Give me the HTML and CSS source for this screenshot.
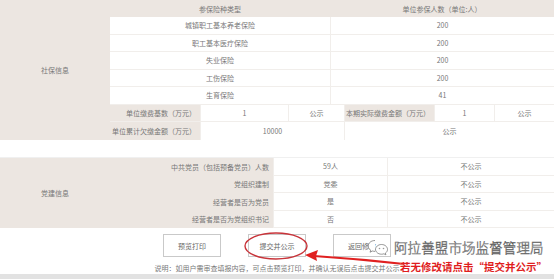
FILE: index.html
```html
<!DOCTYPE html>
<html lang="zh">
<head>
<meta charset="utf-8">
<title>信息公示</title>
<link rel="stylesheet" href="styles.css">
</head>
<body>
<div class="page">
  <section class="sb">
    <div class="side">社保信息</div>
    <div class="row two head"><div class="c">参保险种类型</div><div class="c">单位参保人数（单位:人）</div></div>
    <div class="row two"><div class="c">城镇职工基本养老保险</div><div class="c">200</div></div>
    <div class="row two"><div class="c">职工基本医疗保险</div><div class="c">200</div></div>
    <div class="row two"><div class="c">失业保险</div><div class="c">200</div></div>
    <div class="row two"><div class="c">工伤保险</div><div class="c">200</div></div>
    <div class="row two"><div class="c">生育保险</div><div class="c">41</div></div>
    <div class="row six">
      <div class="c lab">单位缴费基数（万元）</div><div class="c">1</div><div class="c">公示</div>
      <div class="c lab">本期实际缴费金额（万元）</div><div class="c">1</div><div class="c">公示</div>
    </div>
    <div class="row three">
      <div class="c lab">单位累计欠缴金额（万元）</div><div class="c">10000</div><div class="c">公示</div>
    </div>
  </section>

  <section class="dj">
    <div class="side">党建信息</div>
    <div class="c lab">中共党员（包括预备党员）人数</div><div class="c v">59人</div><div class="c v">不公示</div>
    <div class="c lab">党组织建制</div><div class="c v">党委</div><div class="c v">不公示</div>
    <div class="c lab">经营者是否为党员</div><div class="c v">是</div><div class="c v">不公示</div>
    <div class="c lab">经营者是否为党组织书记</div><div class="c v">否</div><div class="c v">不公示</div>
  </section>

  <div class="actions">
    <div class="btns">
      <button class="btn">预览打印</button>
      <button class="btn">提交并公示</button>
      <button class="btn">返回修改</button>
    </div>
    <p class="note">说明：如用户需审查填报内容，可点击预览打印，并确认无误后点击提交并公示</p>
  </div>
  <div class="band"></div>

  <svg class="marks" width="554" height="279" viewBox="0 0 554 279">
    <ellipse cx="276" cy="246" rx="31" ry="13" fill="none" stroke="#c8343a" stroke-width="1.4"/>
    <path d="M404 264 Q360 259 314 256" fill="none" stroke="#e02020" stroke-width="2"/>
    <path d="M305 255 L318 250 L316 256 L317 261 Z" fill="#e02020"/>
  </svg>

  <div class="wm">
    <svg class="wx" width="22" height="17" viewBox="0 0 22 17">
      <path d="M8 1.5C4.2 1.5 1.2 4 1.2 7c0 1.7 1 3.2 2.5 4.2l-.6 2 2.3-1.2c.8.2 1.7.4 2.6.4" fill="#fff" stroke="#777" stroke-width="0.8"/>
      <path d="M14.5 5.5c3.3 0 6 2.2 6 4.9 0 1.5-.8 2.8-2.1 3.7l.5 1.7-2-1c-.8.3-1.6.4-2.4.4-3.3 0-6-2.2-6-4.8s2.7-4.9 6-4.9z" fill="#fff" stroke="#777" stroke-width="0.8"/>
      <circle cx="12.5" cy="9.5" r="0.8" fill="#999"/>
      <circle cx="16.5" cy="9.5" r="0.8" fill="#999"/>
    </svg>
    <span class="wm-text">阿拉善盟市场监督管理局</span>
  </div>
  <div class="tip">若无修改请点击“提交并公示”</div>
</div>
</body>
</html>
```

FILE: styles.css
```css
* { box-sizing: border-box; }
html, body { margin: 0; padding: 0; background: #fff; }
body {
  width: 554px;
  height: 279px;
  overflow: hidden;
  font-family: "Noto Sans CJK SC", "Noto Sans", sans-serif;
  font-size: 7px;
  color: #777;
}
.page {
  position: relative;
  width: 554px;
  height: 279px;
}
.c {
  display: flex;
  align-items: center;
  justify-content: center;
  white-space: nowrap;
  overflow: hidden;
}
.lab {
  justify-content: flex-end;
  padding-right: 4px;
  background: #ece6e1;
}

/* 社保信息 */
.sb {
  display: grid;
  grid-template-columns: 110px 444px;
  grid-template-rows: 17px repeat(7, 17.5px);
}
.side {
  grid-column: 1;
  grid-row: 1 / -1;
  background: #ece6e1;
  display: flex;
  align-items: center;
  justify-content: center;
}
.row {
  grid-column: 2;
  display: grid;
  border-bottom: 1px solid #f1eeeb;
}
.row > .c + .c { border-left: 1px solid #f1eeeb; }
.two { grid-template-columns: 220px 224px; }
.head { background: #ece6e1; border-bottom: none; }
.head > .c + .c { border-left: none; }
.six { grid-template-columns: 90px 88px 56px 90px 60px 60px; }
.three { grid-template-columns: 90px 144px 210px; border-bottom: none; }

/* 党建信息 */
.dj {
  margin-top: 17.5px;
  border-top: 1px solid #f0f0f0;
  display: grid;
  grid-template-columns: 110px 163px 114px 167px;
  grid-template-rows: repeat(4, 17.5px);
}
.dj .side { grid-row: 1 / 5; }
.dj .v {
  border-bottom: 1px solid #f1eeeb;
  border-left: 1px solid #f1eeeb;
}

/* 按钮 */
.actions {
  padding-top: 6px;
  display: flex;
  flex-direction: column;
  align-items: center;
}
.btns {
  display: flex;
  gap: 27px;
}
.btn {
  width: 58px;
  height: 23px;
  padding: 0;
  background: #fff;
  border: 1px solid #c9c9c9;
  border-radius: 0;
  font-family: inherit;
  font-size: 7px;
  color: #666;
}
.note {
  margin: 6px 0 0;
  line-height: 10px;
  font-size: 7px;
  color: #777;
}
.band {
  position: absolute;
  left: 0;
  bottom: 0;
  width: 554px;
  height: 5px;
  background: #e2e2e2;
}

/* 叠加标注 */
.marks {
  position: absolute;
  left: 0;
  top: 0;
}
.wm {
  position: absolute;
  left: 367px;
  top: 239px;
  display: flex;
  align-items: center;
  gap: 5px;
}
.wm-text {
  font-size: 13.5px;
  line-height: 17px;
  font-weight: 300;
  color: #fff;
  -webkit-text-stroke: 0.45px #555;
  letter-spacing: 0.1px;
}
.tip {
  position: absolute;
  left: 400px;
  top: 260px;
  font-size: 10.5px;
  line-height: 13px;
  font-weight: 700;
  color: #e01e1e;
  white-space: nowrap;
  text-shadow: 0 0 1px #fff;
}
```
